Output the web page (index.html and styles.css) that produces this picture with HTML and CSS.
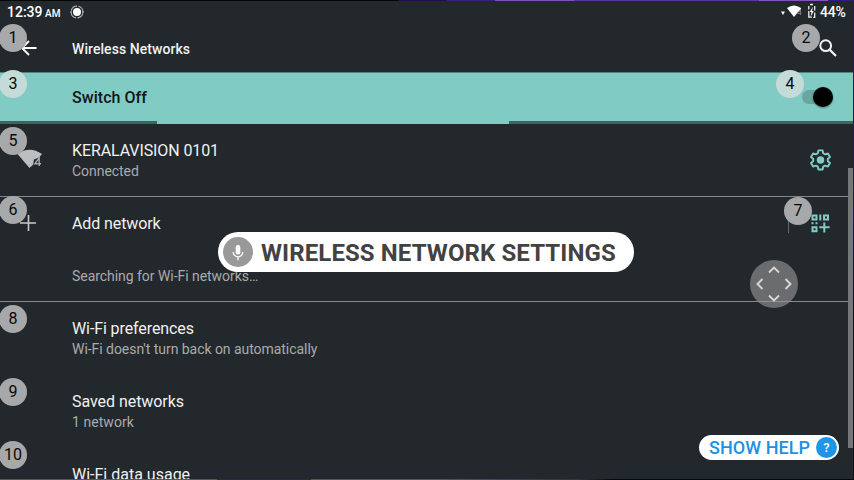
FILE: index.html
```html
<!DOCTYPE html>
<html lang="en">
<head>
<meta charset="utf-8">
<title>Wireless Networks</title>
<link rel="stylesheet" href="styles.css">
</head>
<body>
<main class="screen">
  <header class="status">
    <span class="clock">12:39</span><span class="ampm">AM</span>
    <svg class="target" viewBox="0 0 14 14"><circle cx="7" cy="7" r="5.9" fill="none" stroke="#aaa" stroke-width="1.1" stroke-dasharray="7.8 1.47" stroke-dashoffset="-.7"/><circle cx="7" cy="7" r="4" fill="#fff"/><path d="M0 7h2M12 7h2" stroke="#ccc"/></svg>
    <svg class="signals" viewBox="0 0 40 16"><path d="M1 8.5h4L3 12z" fill="#fff"/><path d="M7 5q7-5 14 0v3l-3 1-4 5z" fill="#fff"/><path d="M20.5 12V6.5L17.5 10.5h4" fill="none" stroke="#777" stroke-width="1"/><path d="M30 1.5h3M28.8 3v3.5M28.8 8v6.2h3M34.7 3v4.5M34.7 9.5v4.8h-1.5" fill="none" stroke="#eee" stroke-width="1.3"/><path d="M33 3.5l-3.2 5.5h1.7l-1 5 3.2-6h-1.7z" fill="#fff"/></svg>
    <span class="percent">44%</span>
  </header>
  <section class="appbar">
    <svg class="back" viewBox="0 0 18 18"><path d="M16.5 9H2M9 2L2 9l7 7" fill="none" stroke="#fff" stroke-width="1.8"/></svg>
    <h1>Wireless Networks</h1>
    <svg class="search" viewBox="0 0 18 18"><circle cx="6.7" cy="6.7" r="5.4" fill="none" stroke="#f2f2f2" stroke-width="2"/><path d="M10.6 10.6l6.4 6.4" stroke="#f2f2f2" stroke-width="2.2"/></svg>
  </section>
  <section class="switchbar">
    <span class="title">Switch Off</span>
    <span class="toggle"><i></i></span>
  </section>
  <div class="progress"><i></i></div>
  <section class="row connected">
    <svg class="wifi" viewBox="0 0 26 20"><path d="M.5 5Q12.5-3.5 25 5l-3 3.5-5 2-.8 5L12.5 19z" fill="#bcbec0"/><path d="M22.2 17V8.8l-4.4 6H24" fill="none" stroke="#aaacae" stroke-width="1.4"/></svg>
    <div class="copy"><div class="title network">KERALAVISION 0101</div><div class="sub">Connected</div></div>
    <svg class="gear" viewBox="0 0 24 24"><path d="M9.8 2.5h4.4l.6 3 2 1.1 2.9-1 2.2 3.8-2.3 2v2.2l2.3 2-2.2 3.8-2.9-1-2 1.1-.6 3H9.8l-.6-3-2-1.1-2.9 1-2.2-3.8 2.3-2v-2.2l-2.3-2 2.2-3.8 2.9 1 2-1.1z" fill="none" stroke="#80cbc4" stroke-width="2" stroke-linejoin="round"/><circle cx="12" cy="12.5" r="3.9" fill="#80cbc4"/></svg>
  </section>
  <section class="available">
    <div class="row add">
      <svg class="plus" viewBox="0 0 16 16"><path d="M8.5 0v16M0 8h16" stroke="#c8cacb" stroke-width="1.6"/></svg>
      <span class="title addlabel">Add network</span>
      <span class="rule"></span>
      <svg class="qr" viewBox="0 0 19 19"><g fill="none" stroke="#80cbc4" stroke-width="2"><path d="M1.5 1.5h4v4h-4zM13 1.5h4v4h-4zM1.5 13.3h4v4h-4zM9.3.5v6M13.3 8.5v10M8.3 13.3h10.3"/><path d="M.5 9.3h2M4.5 9.3h2"/></g></svg>
    </div>
    <p class="sub searching">Searching for Wi-Fi networks…</p>
  </section>
  <section class="row pref"><div class="copy"><div class="title prefs">Wi-Fi preferences</div><div class="sub auto">Wi-Fi doesn't turn back on automatically</div></div></section>
  <section class="row pref"><div class="copy"><div class="title saved">Saved networks</div><div class="sub count">1 network</div></div></section>
  <section class="row pref"><div class="copy"><div class="title usage">Wi-Fi data usage</div></div></section>
</main>
<div class="edge-top"></div><div class="edge-bottom"></div><div class="edge-right"></div><div class="scrollbar"></div>
<b class="badge b1">1</b><b class="badge b2">2</b><b class="badge light b3">3</b><b class="badge light b4">4</b><b class="badge b5">5</b><b class="badge b6">6</b><b class="badge b7">7</b><b class="badge b8">8</b><b class="badge b9">9</b><b class="badge b10">10</b>
<svg class="dpad" viewBox="0 0 48 48"><circle cx="24" cy="24" r="24" fill="#9a9a9a" fill-opacity=".6"/><path d="M19 12.5l5-5 5 5M19 35.5l5 5 5-5M12.5 19l-5 5 5 5M35.5 19l5 5-5 5" fill="none" stroke="#d5d7d8" stroke-width="1.9"/></svg>
<div class="voice">
  <svg class="mic" viewBox="0 0 30 30"><circle cx="15" cy="15" r="15" fill="#999"/><rect x="12.7" y="8" width="4.6" height="9.5" rx="2.3" fill="#fff"/><path d="M10.2 15a4.8 4.8 0 0 0 9.6 0M15 20v3.2" fill="none" stroke="#fff" stroke-width="1.3"/></svg>
  <span class="command">WIRELESS NETWORK SETTINGS</span>
</div>
<div class="help"><span class="helptext">SHOW HELP</span><span class="question">?</span></div>
</body>
</html>
```
FILE: styles.css
```css
* { box-sizing: border-box; }
body { margin: 0; width: 854px; height: 480px; overflow: hidden; background: #23282c; font-family: Roboto, sans-serif; color: #f0f1f1; position: relative; }
svg { display: block; flex: none; }
.screen { height: 480px; overflow: hidden; display: flex; flex-direction: column; }
.screen > * { flex: none; }
.status { height: 24px; padding: 0 8px 0 7px; display: flex; align-items: center; font-weight: 500; color: #fff; }
.clock { font-size: 14px; width: 38px; white-space: nowrap; }
.ampm { font-size: 10px; width: 25px; padding-top: 2px; }
.target { width: 14px; height: 14px; }
.signals { width: 40px; height: 16px; margin-left: auto; margin-top: -2px; }
.percent { font-size: 14px; width: 26px; letter-spacing: -.2px; }
.appbar { height: 48px; display: flex; align-items: center; padding: 0 17px 0 20px; }
.back { width: 18px; height: 18px; }
h1 { font-size: 14px; font-weight: 500; letter-spacing: .06px; margin: 1px 0 0 34px; }
.search { width: 18px; height: 18px; margin-left: auto; }
.switchbar { height: 49px; display: flex; align-items: center; padding: 0 21px 0 72px; background: #80cbc4; border-top: 1px solid #55827f; }
.title { font-size: 16px; line-height: 20px; white-space: nowrap; letter-spacing: -.1px; }
.switchbar .title { color: #111718; font-weight: 500; letter-spacing: .05px; padding-top: 1px; }
.toggle { margin-left: auto; width: 31px; height: 14px; border-radius: 7px; background: #6ba5a0; display: flex; justify-content: flex-end; align-items: center; }
.toggle i { width: 20px; height: 20px; flex: none; border-radius: 50%; background: #000; box-shadow: 0 1px 2px #0006; }
.progress { height: 3px; background: #426460; padding-left: 157px; }
.progress i { display: block; width: 352px; height: 3px; background: #80cbc4; }
.row { display: flex; align-items: center; }
.connected { height: 73px; border-bottom: 1px solid #85888a; padding: 0 22px 0 17px; }
.wifi { width: 26px; height: 20px; margin-bottom: 2px; }
.connected .copy { margin-left: 29px; padding-top: 2px; }
.sub { font-size: 14px; line-height: 20px; color: #a9abac; white-space: nowrap; letter-spacing: -.045px; }
.gear { width: 23px; height: 23px; margin-left: auto; margin-bottom: 2px; }
.available { height: 105px; border-bottom: 1px solid #85888a; }
.add { height: 53px; padding: 0 24px 0 20px; }
.plus { width: 16px; height: 16px; margin-bottom: 1px; }
.addlabel { margin-left: 36px; }
.rule { width: 1px; height: 22px; background: #65696b; margin: -3px 22px 0 auto; }
.qr { width: 19px; height: 19px; margin-bottom: 1px; }
.searching { margin: 16px 0 0 72px; }
.pref { height: 73px; padding-left: 72px; }
.saved { letter-spacing: -.05px; }
.count { letter-spacing: .05px; }
.usage { margin-bottom: 19px; letter-spacing: 0; }
.badge { position: absolute; width: 28px; height: 28px; border-radius: 50%; background: #a7a8aa; color: #080808; font: 400 16px/28px Roboto, sans-serif; text-align: center; }
.badge.light { background: #c5dbd8; }
.b1 { left: -1px; top: 24px; } .b2 { left: 792px; top: 24px; }
.b3 { left: -1px; top: 70px; } .b4 { left: 776px; top: 70px; }
.b5 { left: -1px; top: 127px; } .b6 { left: -1px; top: 196px; }
.b7 { left: 784px; top: 197px; } .b8 { left: -1px; top: 305px; }
.b9 { left: -1px; top: 378px; } .b10 { left: -1px; top: 441px; }
.dpad { position: absolute; left: 750px; top: 260px; width: 48px; height: 48px; }
.voice { position: absolute; left: 218px; top: 232px; width: 416px; height: 40px; border-radius: 20px; background: #fff; display: flex; align-items: center; padding-left: 5px; }
.mic { width: 30px; height: 30px; }
.command { margin-left: 8px; padding-top: 2px; font-size: 24px; font-weight: 700; letter-spacing: .1px; color: #424242; white-space: nowrap; }
.help { position: absolute; left: 699px; top: 435px; width: 140px; height: 25px; border-radius: 13px; background: #fff; display: flex; align-items: center; justify-content: space-between; padding: 0 2px 0 10px; color: #1e90e5; }
.helptext { font-size: 18px; font-weight: 500; letter-spacing: .05px; white-space: nowrap; }
.question { width: 21px; height: 21px; border-radius: 50%; background: #1e96e8; color: #fff; text-align: center; font-size: 13px; line-height: 21px; font-weight: 500; }
.scrollbar { position: absolute; left: 848px; top: 168px; width: 5px; height: 280px; background: #75787a; }
.edge-top { position: absolute; left: 0; top: 0; width: 854px; height: 1px; background: linear-gradient(90deg, #060606 399px, #210f48 399px 447px, #3a207e 447px 495px, #8250bc 495px 574px, #5936a3 574px 759px, #8751c4 759px 828px, #351887 828px); }
.edge-bottom { position: absolute; left: 0; bottom: 0; width: 854px; height: 1px; background: linear-gradient(90deg, #60439a 217px, #30216b 217px 311px, #60439a 311px 440px, #3d2861 578px, #080808 612px); }
.edge-right { position: absolute; right: 0; top: 0; width: 1px; height: 480px; background: linear-gradient(#2b1765 0 180px, #101018 320px); }
```
